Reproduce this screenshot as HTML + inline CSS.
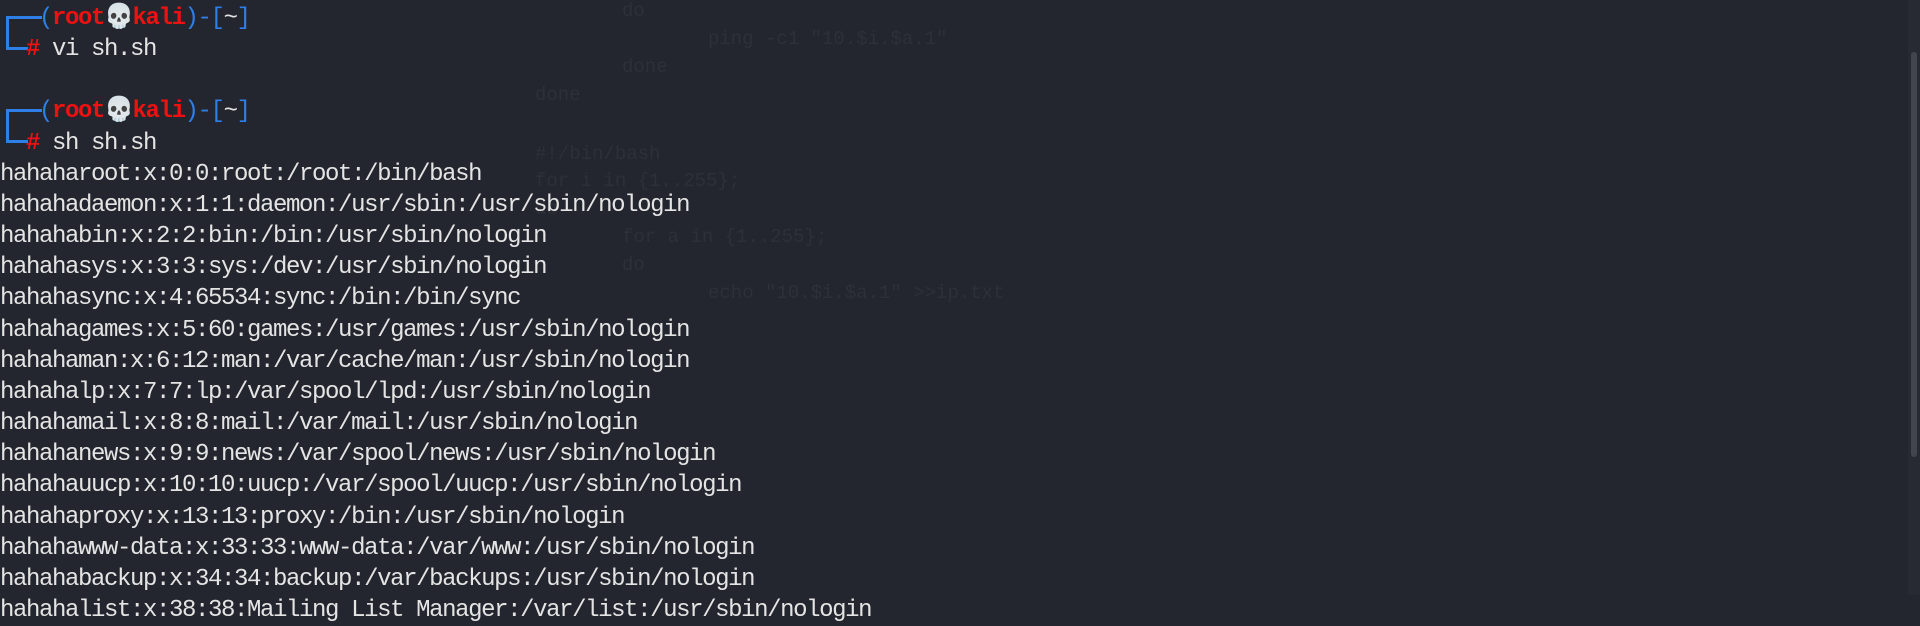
<!DOCTYPE html>
<html><head><meta charset="utf-8"><style>
html,body{margin:0;padding:0;width:1920px;height:595px;overflow:hidden;background:#23262e;}
.ghost{position:absolute;font-family:"Liberation Mono","DejaVu Sans Mono",monospace;font-size:19px;color:#2c3038;white-space:pre;}
.term{position:absolute;left:0;top:3px;font-family:"Liberation Mono","Noto Sans CJK SC",monospace;font-size:24px;letter-spacing:-1.4px;line-height:31.15px;color:#e4e4e4;white-space:pre;}
.b{color:#2f7fe8}.r{color:#ee1111;font-weight:bold}
.ln{position:absolute;background:#2f7fe8;}
.track{position:absolute;left:1908px;top:0;width:12px;height:595px;background:#272a33;}
.thumb{position:absolute;left:1911px;top:52px;width:6px;height:405px;background:#42454e;border-radius:3px;}
</style></head><body>
<div class="ghost" style="left:622px;top:0px">do</div>
<div class="ghost" style="left:708px;top:28px">ping -c1 "10.$i.$a.1"</div>
<div class="ghost" style="left:622px;top:56px">done</div>
<div class="ghost" style="left:535px;top:84px">done</div>
<div class="ghost" style="left:535px;top:143px">#!/bin/bash</div>
<div class="ghost" style="left:535px;top:170px">for i in {1..255};</div>
<div class="ghost" style="left:535px;top:198px">do</div>
<div class="ghost" style="left:622px;top:226px">for a in {1..255};</div>
<div class="ghost" style="left:622px;top:254px">do</div>
<div class="ghost" style="left:708px;top:282px">echo "10.$i.$a.1" &gt;&gt;ip.txt</div>
<div class="ln" style="left:6px;top:16px;width:3px;height:34px"></div>
<div class="ln" style="left:6px;top:16px;width:36px;height:3px"></div>
<div class="ln" style="left:6px;top:47px;width:22px;height:3px"></div>
<div class="ln" style="left:6px;top:109px;width:3px;height:34px"></div>
<div class="ln" style="left:6px;top:109px;width:36px;height:3px"></div>
<div class="ln" style="left:6px;top:140px;width:22px;height:3px"></div>
<div class="term">   <span class="b">(</span><span class="r">root💀kali</span><span class="b">)-[</span>~<span class="b">]</span>
  <span class="r">#</span> vi sh.sh

   <span class="b">(</span><span class="r">root💀kali</span><span class="b">)-[</span>~<span class="b">]</span>
  <span class="r">#</span> sh sh.sh
hahaharoot:x:0:0:root:/root:/bin/bash
hahahadaemon:x:1:1:daemon:/usr/sbin:/usr/sbin/nologin
hahahabin:x:2:2:bin:/bin:/usr/sbin/nologin
hahahasys:x:3:3:sys:/dev:/usr/sbin/nologin
hahahasync:x:4:65534:sync:/bin:/bin/sync
hahahagames:x:5:60:games:/usr/games:/usr/sbin/nologin
hahahaman:x:6:12:man:/var/cache/man:/usr/sbin/nologin
hahahalp:x:7:7:lp:/var/spool/lpd:/usr/sbin/nologin
hahahamail:x:8:8:mail:/var/mail:/usr/sbin/nologin
hahahanews:x:9:9:news:/var/spool/news:/usr/sbin/nologin
hahahauucp:x:10:10:uucp:/var/spool/uucp:/usr/sbin/nologin
hahahaproxy:x:13:13:proxy:/bin:/usr/sbin/nologin
hahahawww-data:x:33:33:www-data:/var/www:/usr/sbin/nologin
hahahabackup:x:34:34:backup:/var/backups:/usr/sbin/nologin
hahahalist:x:38:38:Mailing List Manager:/var/list:/usr/sbin/nologin</div>
<div class="track"></div><div class="thumb"></div>
</body></html>
